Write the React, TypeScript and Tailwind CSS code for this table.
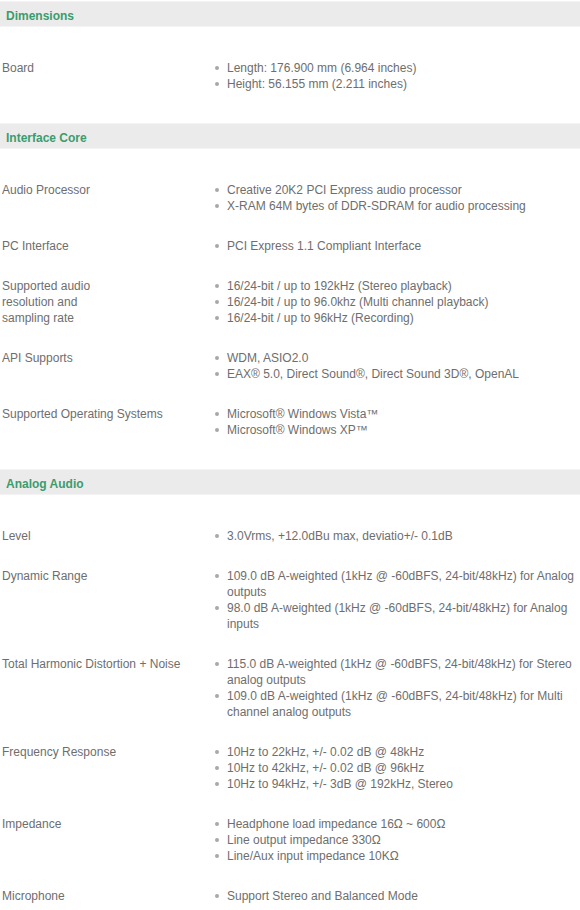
import React from "react";

type Row = { label: React.ReactNode; items: string[] };
type Section = { title: string; rows: Row[] };

const sections: Section[] = [
  {
    title: "Dimensions",
    rows: [
      {
        label: "Board",
        items: ["Length: 176.900 mm (6.964 inches)", "Height: 56.155 mm (2.211 inches)"],
      },
    ],
  },
  {
    title: "Interface Core",
    rows: [
      {
        label: "Audio Processor",
        items: [
          "Creative 20K2 PCI Express audio processor",
          "X-RAM 64M bytes of DDR-SDRAM for audio processing",
        ],
      },
      { label: "PC Interface", items: ["PCI Express 1.1 Compliant Interface"] },
      {
        label: (
          <>
            Supported audio
            <br />
            resolution and
            <br />
            sampling rate
          </>
        ),
        items: [
          "16/24-bit / up to 192kHz (Stereo playback)",
          "16/24-bit / up to 96.0khz (Multi channel playback)",
          "16/24-bit / up to 96kHz (Recording)",
        ],
      },
      {
        label: "API Supports",
        items: ["WDM, ASIO2.0", "EAX® 5.0, Direct Sound®, Direct Sound 3D®, OpenAL"],
      },
      {
        label: "Supported Operating Systems",
        items: ["Microsoft® Windows Vista™", "Microsoft® Windows XP™"],
      },
    ],
  },
  {
    title: "Analog Audio",
    rows: [
      { label: "Level", items: ["3.0Vrms, +12.0dBu max, deviatio+/- 0.1dB"] },
      {
        label: "Dynamic Range",
        items: [
          "109.0 dB A-weighted (1kHz @ -60dBFS, 24-bit/48kHz) for Analog outputs",
          "98.0 dB A-weighted (1kHz @ -60dBFS, 24-bit/48kHz) for Analog inputs",
        ],
      },
      {
        label: "Total Harmonic Distortion + Noise",
        items: [
          "115.0 dB A-weighted (1kHz @ -60dBFS, 24-bit/48kHz) for Stereo analog outputs",
          "109.0 dB A-weighted (1kHz @ -60dBFS, 24-bit/48kHz) for Multi channel analog outputs",
        ],
      },
      {
        label: "Frequency Response",
        items: [
          "10Hz to 22kHz, +/- 0.02 dB @ 48kHz",
          "10Hz to 42kHz, +/- 0.02 dB @ 96kHz",
          "10Hz to 94kHz, +/- 3dB @ 192kHz, Stereo",
        ],
      },
      {
        label: "Impedance",
        items: [
          "Headphone load impedance 16Ω ~ 600Ω",
          "Line output impedance 330Ω",
          "Line/Aux input impedance 10KΩ",
        ],
      },
      { label: "Microphone", items: ["Support Stereo and Balanced Mode"] },
    ],
  },
];

export default function App() {
  return (
    <div className="w-[580px] bg-white pt-px font-['Liberation_Sans',Arial,sans-serif] text-[12px] leading-4 text-[#6e6e6e]">
      {sections.map((s) => (
        <div key={s.title}>
          <div className="flex h-[26px] items-center border-y border-[#f4f4f4] bg-[#ebebeb] pt-[4px] pl-[6px] font-bold text-[#3b9c6d]">
            {s.title}
          </div>
          <div className="pt-[21px] pb-[19px]">
            {s.rows.map((r, i) => (
              <div key={i} className="flex py-3">
                <div className="w-[212px] shrink-0 pl-[2px]">{r.label}</div>
                <ul className="flex-1">
                  {r.items.map((it) => (
                    <li key={it} className="flex items-start">
                      <span className="mt-[6px] ml-[3px] mr-[8px] h-[4px] w-[4px] shrink-0 rounded-full bg-[#a8a8a8]" />
                      <span>{it}</span>
                    </li>
                  ))}
                </ul>
              </div>
            ))}
          </div>
        </div>
      ))}
    </div>
  );
}
